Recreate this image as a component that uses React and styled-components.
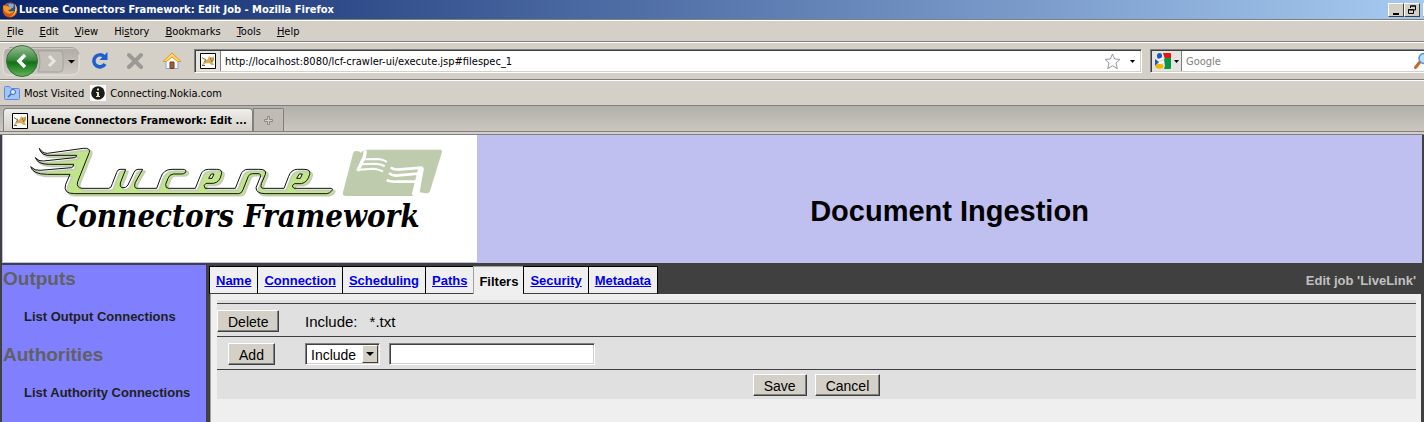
import React from "react";
import styled, { createGlobalStyle, css } from "styled-components";

const chrome = "#d4d0c8";
const dark = "#404040";

const GlobalStyle = createGlobalStyle`
  *, *::before, *::after { box-sizing: border-box; }
  body { margin: 0; background: ${dark}; font-family: "Liberation Sans", Arial, sans-serif; color: #000; }
  button, input, select { font-family: inherit; color: inherit; border-radius: 0; }
  svg { display: block; flex: none; }
`;

const Window = styled.div`
  display: flex;
  flex-direction: column;
  min-height: 100vh;
  overflow: hidden;
`;

const Chrome = styled.header`
  font-family: "DejaVu Sans Condensed", "DejaVu Sans", Tahoma, sans-serif;
  font-size: 11px;
  background: ${chrome};
`;

const TitleBar = styled.div`
  display: flex;
  align-items: center;
  height: 19px;
  padding-left: 2px;
  overflow: hidden;
  background: linear-gradient(90deg, #0a246a, #a6caf0);
  color: #fff;
  font-weight: bold;
`;

const WindowTitle = styled.span`
  flex: 1;
  white-space: nowrap;
  padding-left: 1px;
`;

const WindowButtons = styled.div`
  display: flex;
  margin-right: -15px;
`;

const WindowButton = styled.button`
  width: 16px;
  height: 14px;
  padding: 1px 2px;
  margin-left: ${(p) => (p.$apart ? "3px" : "0")};
  background: ${chrome};
  border: 1px solid;
  border-color: #fff #404040 #404040 #fff;
`;

const Bar = styled.div`
  display: flex;
  align-items: center;
  height: ${(p) => p.$height};
  border-top: 1px solid #fff;
  border-bottom: 1px solid #808080;
`;

const MenuBar = styled(Bar)`
  border-top: 1px solid #808080;
  box-shadow: inset 0 1px #fff;
  padding: 2px 0 0 7px;
  gap: 16px;
`;

const PlainButton = styled.button`
  display: flex;
  align-items: center;
  gap: 4px;
  padding: 0;
  border: 0;
  background: none;
  font-size: 11px;
  white-space: nowrap;
`;

const MenuItem = styled(PlainButton)`
  display: block;
`;

const NavBar = styled(Bar)`
  padding-left: 2px;
`;

const NavIcons = styled.div`
  display: flex;
  align-items: center;
  gap: 18px;
  padding: 0 12px 0 11px;
`;

const Field = styled.div`
  display: flex;
  align-items: center;
  height: 24px;
  background: #fff;
  border: 1px solid;
  border-color: #808080 #fff #fff #808080;
  box-shadow: inset 1px 1px ${dark}, inset -1px -1px ${chrome};
`;

const AddressField = styled(Field)`
  flex: 1;
  padding-right: 6px;
`;

const FieldTools = styled.div`
  display: flex;
  align-items: center;
  gap: 9px;
`;

const SearchField = styled(Field)`
  flex: 0 0 274px;
  margin-left: 8px;
  border-right: 0;
  box-shadow: inset 1px 1px ${dark}, inset 0 -1px ${chrome};
`;

const FieldBadge = styled.div`
  display: flex;
  align-items: center;
  justify-content: center;
  gap: 3px;
  width: ${(p) => p.$width};
  height: 20px;
  margin-left: 1px;
  background: #e6e4df;
  border-right: 1px solid #808080;
`;

const FieldInput = styled.input`
  flex: 1;
  min-width: 0;
  height: 18px;
  padding: 0 0 0 4px;
  border: 0;
  outline: 0;
  background: none;
  font-size: 11px;
  &::placeholder { color: #808080; opacity: 1; }
`;

const BookmarkBar = styled(Bar)`
  padding-left: 4px;
  gap: 6px;
`;

const TabStrip = styled.div`
  display: flex;
  align-items: flex-end;
  height: 26px;
  padding-left: 3px;
  background: linear-gradient(#b3b0a9, #cbc7c0);
  border-bottom: 1px solid #808080;
`;

const BrowserTab = styled.button`
  display: flex;
  align-items: center;
  justify-content: ${(p) => (p.$active ? "flex-start" : "center")};
  gap: 3px;
  width: ${(p) => p.$width};
  height: 23px;
  padding: 1px 0 0 ${(p) => (p.$active ? "8px" : "0")};
  border: 1px solid #808080;
  border-bottom: 0;
  background: ${(p) => (p.$active ? "linear-gradient(#efeeeb, #d4d0c8)" : "#c0bcb5")};
  border-radius: ${(p) => (p.$active ? "4px 4px 0 0" : "0 2px 0 0")};
  font-size: 11px;
  font-weight: bold;
  white-space: nowrap;
`;

const StripEnd = styled.div`
  height: 3px;
  background: ${chrome};
  border-bottom: 1px solid #808080;
`;

const Page = styled.div`
  flex: 1;
  display: flex;
  flex-direction: column;
  padding: 0 2px;
  gap: 2px;
  background: ${dark};
`;

const Banner = styled.div`
  display: flex;
  height: 128px;
  background: #bfbff0;
  padding-left: 1px;
`;

const Logo = styled.div`
  width: 474px;
  flex: none;
  height: 127px;
  padding: 10px 0 0 25px;
  background: #fff;
`;

const LogoName = styled.div`
  padding-left: 28px;
  font: italic bold 31px/34px "DejaVu Serif Condensed", "DejaVu Serif", serif;
  white-space: nowrap;
`;

const BannerTitle = styled.h1`
  flex: 1;
  margin: 0;
  padding-top: 60px;
  text-align: center;
  font-size: 29px;
  line-height: 32px;
`;

const Body = styled.div`
  flex: 1;
  display: flex;
  gap: 3px;
`;

const Sidebar = styled.nav`
  width: 204px;
  flex: none;
  padding: 1px 0 0 1px;
  background: #8080ff;
`;

const SideHeading = styled.h2`
  margin: 0;
  font-size: 19px;
  line-height: 26px;
  color: #606060;
`;

const SideLink = styled.a`
  display: block;
  padding: 16px 0 16px 21px;
  font-size: 13px;
  font-weight: bold;
  line-height: 18px;
  color: #202020;
  text-decoration: none;
  white-space: nowrap;
`;

const Main = styled.main`
  flex: 1;
  min-width: 0;
  display: flex;
  flex-direction: column;
`;

const TabRow = styled.div`
  display: flex;
  align-items: flex-start;
  padding-top: 1px;
  font-size: 13px;
  font-weight: bold;
  line-height: 16px;
`;

const PageTabs = styled.nav`
  display: flex;
  height: 29px;
  border-right: 1px solid #000;
`;

const PageTab = styled.a`
  height: 28px;
  padding: 6px 6px 0;
  border: solid #000;
  border-width: 1px 0 0 1px;
  border-bottom: 1px solid ${dark};
  background: #efefef;
  color: #0000ee;
  ${(p) =>
    p.$active &&
    css`
      height: 29px;
      padding: 7px 5px 0;
      border: 1px solid #a0a0a0;
      border-right: 0;
      border-bottom: 0;
      color: #000;
      text-decoration: none;
    `}
`;

const JobTitle = styled.span`
  margin-left: auto;
  padding: 7px 6px 0 0;
  color: #c0c0c0;
`;

const Content = styled.div`
  flex: 1;
  margin: -1px 1px 0 1px;
  padding: 6px 5px 24px 6px;
  background: #efefef;
  border-left: 1px solid #a0a0a0;
`;

const FormPanel = styled.form`
  padding-top: 3px;
  background: #e0e0e0;
`;

const FilterTable = styled.table`
  width: 100%;
  border-collapse: collapse;
  font-size: 15px;
`;

const Row = styled.tr`
  height: ${(p) => p.$height};
  border-top: 1px solid ${dark};
`;

const Cell = styled.td`
  padding: 2px 0 0;
`;

const ActionCell = styled(Cell)`
  width: 88px;
  padding-right: 19px;
`;

const Controls = styled.div`
  display: flex;
  align-items: center;
  justify-content: ${(p) => (p.$center ? "center" : "flex-start")};
  gap: ${(p) => p.$gap};
`;

const PushButton = styled.button`
  height: 22px;
  padding: 2px 10px 0;
  background: ${chrome};
  border: 1px solid;
  border-color: #fff ${dark} ${dark} #fff;
  box-shadow: inset -1px -1px #808080;
  font-size: 14px;
  line-height: 18px;
  vertical-align: middle;
`;

const SelectBox = styled.div`
  position: relative;
  width: 75px;
  height: 22px;
`;

const Select = styled.select`
  appearance: none;
  width: 100%;
  height: 100%;
  padding: 1px 0 0 5px;
  background: #fff;
  border: 1px solid;
  border-color: #808080 #fff #fff #808080;
  box-shadow: inset 1px 1px ${dark}, inset -1px -1px ${chrome};
  font-size: 14px;
`;

const SelectArrow = styled.span`
  position: absolute;
  top: 2px;
  right: 2px;
  width: 16px;
  height: 18px;
  padding: 6px 3px;
  pointer-events: none;
  background: ${chrome};
  border: 1px solid;
  border-color: #fff ${dark} ${dark} #fff;
`;

const TextBox = styled.input`
  width: 206px;
  height: 22px;
  padding: 0 4px;
  background: #fff;
  border: 1px solid;
  border-color: #808080 #fff #fff #808080;
  box-shadow: inset 1px 1px ${dark}, inset -1px -1px ${chrome};
  font-size: 14px;
`;

const FirefoxIcon = () => (
  <svg width="16" height="16" viewBox="0 0 16 16">
    <circle cx="8" cy="8" r="7.4" fill="#d9570d" />
    <circle cx="8.8" cy="6.3" r="5" fill="#254f9e" />
    <path d="M6 2.5q3-2 6 .5l-1 3-3 .5z" fill="#78aee6" />
    <path d="M1 3l2 1q3-.6 4 1l3 .7-2 2-2 .3q1 2 4 1.3l2-.6q-1 3-5 3-4-1-5-4-1-2-1-4.700z" fill="#f59a23" />
    <path d="M13 2q3 4 1 8-2 4-6 5 7-4 5-13z" fill="#ffd34f" />
  </svg>
);

const Tomcat = () => (
  <svg width="16" height="16" viewBox="0 0 16 16">
    <path d="M.5.5h15v15H.5z" fill="#fff" stroke="#000" />
    <path d="M8 6l1-3 1.500 1.200h2L14 3v4.500L12.500 9l1.500 3h-2.500L9 10l-4 .5L3 12.500l-1-.5 2-3.500z" fill="#d9ab55" />
    <path d="M2 4.500l2 1.500 2 .5M2 12.500h3M4 8.500l2-1" stroke="#6b6357" fill="none" />
    <path d="M10 6h1M12.500 6h.8M11 8h1.500" stroke="#5d482a" fill="none" />
  </svg>
);

const BackForward = () => (
  <svg width="78" height="34" viewBox="0 0 78 34">
    <defs>
      <linearGradient id="back" x2="0" y2="1">
        <stop offset="0" stopColor="#9bbf97" />
        <stop offset=".45" stopColor="#3c8a3e" />
        <stop offset=".55" stopColor="#147018" />
        <stop offset="1" stopColor="#61b65b" />
      </linearGradient>
      <linearGradient id="well" x2="0" y2="1">
        <stop offset="0" stopColor="#b1ada6" />
        <stop offset="1" stopColor="#cfcbc4" />
      </linearGradient>
    </defs>
    <path d="M6 4h64q7 0 7 8v11q0 8-7 8H6q-5 0-5-8V12q0-8 5-8z" fill="url(#well)" stroke="#e7e4df" />
    <path d="M7 3.500h63q6 1 7 7" fill="none" stroke="#a5a29b" />
    <path d="M36 7h22q3 0 3 4v13q0 4-3 4H36q4-10 0-21z" fill="#c3bfb8" stroke="#a4a09a" />
    <circle cx="20" cy="17" r="15.500" fill="url(#back)" stroke="#3a6e3c" />
    <path d="M23 11l-6 6 6 6" fill="none" stroke="#fff" strokeWidth="3.500" />
    <path d="M47 12l5 5-5 5" fill="none" stroke="#e8e6e2" strokeWidth="3" />
    <path d="M66 16h7l-3.500 3.500z" fill="#000" />
  </svg>
);

const ReloadIcon = () => (
  <svg width="17" height="18" viewBox="0 0 17 18">
    <path d="M13 4.500A6 6 0 1 0 14 12" fill="none" stroke="#1d5fd0" strokeWidth="3.500" />
    <path d="M16.500 0v8H8.500z" fill="#1d5fd0" />
  </svg>
);

const StopIcon = () => (
  <svg width="18" height="18" viewBox="0 0 18 18">
    <path d="M3 3l12 12M15 3L3 15" stroke="#9c9994" strokeWidth="4" strokeLinecap="round" />
  </svg>
);

const HomeIcon = () => (
  <svg width="20" height="18" viewBox="0 0 20 18">
    <path d="M4 9v7.500h12V9l-6-5z" fill="#f5f8ff" stroke="#8aa5d6" />
    <path d="M10 1L1 9.500h3.500L10 5l5.500 4.500H19z" fill="#ffd766" stroke="#e29a1c" />
    <path d="M8 10h4v6.500H8z" fill="#9c6032" stroke="#6c4321" />
  </svg>
);

const StarIcon = () => (
  <svg width="17" height="17" viewBox="0 0 17 17">
    <path d="M8.500 1l2.200 5 5.300.4-4 3.600 1.300 5.600-4.800-2.800-4.800 2.800L5 10 1 6.400 6.300 6z" fill="#fafafa" stroke="#999" />
  </svg>
);

const Caret = () => (
  <svg width="5" height="3" viewBox="0 0 5 3">
    <path d="M0 0h5L2.500 3z" fill="#000" />
  </svg>
);

const GoogleIcon = () => (
  <svg width="16" height="16" viewBox="0 0 16 16">
    <path d="M8 0h7q1 0 1 1v5H10z" fill="#e8150e" />
    <path d="M9 6q2-2 7-1v10q0 1-1 1H9l1-3z" fill="#0b9444" />
    <path d="M0 6l4 3-4 4z" fill="#1a57c4" />
    <ellipse cx="4.500" cy="3" rx="2.500" ry="3" fill="#1a57c4" />
    <ellipse cx="4.500" cy="13.200" rx="4" ry="2.500" fill="#f5b400" />
    <path d="M3 7l5-2M4 10l5-1" stroke="#fff" strokeWidth="1.500" />
  </svg>
);

const SearchIcon = () => (
  <svg width="10" height="16" viewBox="0 0 10 16">
    <path d="M1.500 14.500L5.500 9.500" stroke="#c9682b" strokeWidth="3" strokeLinecap="round" />
    <circle cx="10" cy="5.500" r="5" fill="#b9defa" stroke="#5a90d0" strokeWidth="1.500" />
  </svg>
);

const FolderIcon = () => (
  <svg width="16" height="14" viewBox="0 0 16 14">
    <path d="M.5 1.500q0-1 1-1h4l1.500 2h7.500q1 0 1 1v9q0 1-1 1h-13q-1 0-1-1z" fill="#a3c5f5" stroke="#5c8cd6" />
    <circle cx="9" cy="6" r="2.500" fill="#dbeafc" stroke="#3668bd" />
    <path d="M7 8l-3 3" stroke="#3668bd" strokeWidth="1.500" />
  </svg>
);

const InfoIcon = () => (
  <svg width="16" height="16" viewBox="0 0 16 16">
    <path d="M0 0h16v16H0z" fill="#fff" />
    <circle cx="8" cy="8" r="6.800" fill="#1b1b1b" />
    <path d="M7 3.500h2v2H7zM6 7h3v4h1v1H6v-1h1V8H6z" fill="#e9e5b8" />
  </svg>
);

const PlusIcon = () => (
  <svg width="9" height="9" viewBox="0 0 9 9">
    <path d="M3.500.5h2v3h3v2h-3v3h-2v-3h-3v-2h3z" fill="#d4d0c8" stroke="#8b8883" />
  </svg>
);

const script =
  "M118 52Q124 66 142 67L250 52Q272 50 268 64L233 152Q228 170 246 172H326Q334 172 337 158L350 124Q353 115 360 115H377L361 156Q358 168 366 170Q378 172 384 162L402 124Q406 115 414 115H428L406 154Q400 172 412 172H470L482 140Q490 115 516 115H548Q562 115 556 125Q552 129 544 129H520Q508 130 504 142L497 160Q496 172 506 172H586L602 132Q608 115 626 115H650Q669 115 664 130Q660 154 640 157H618Q608 162 615 172H706L722 132Q728 115 744 115H776Q801 114 796 130L784 158Q780 172 790 172H852L866 136Q874 115 892 115H912Q933 115 929 130Q923 154 904 158H884Q872 164 882 172H990Q1000 171 996 178Q990 188 980 188H796Q768 188 768 170L781 138Q784 128 774 128H758Q748 128 745 136L729 176Q725 188 716 188H224Q188 188 197 160L210 130H142Q98 130 92 107Q104 120 120 118L215 110Q221 107 221 100H148Q112 100 106 80Q116 92 130 90L224 80Q232 76 230 73H156Q122 76 118 52Z";

const LuceneLogo = () => (
  <svg width="416" height="54" viewBox="84 42 1248 162" role="img" aria-label="Lucene">
    <path d={script} transform="translate(7 6)" fill="#c0e688" stroke="#c6c9c1" strokeWidth="5" strokeLinejoin="round" />
    <path d={script} transform="translate(5 4)" fill="none" stroke="#c0e688" strokeWidth="1" />
    <path d={script} fill="none" stroke="#111" strokeWidth="3" strokeLinejoin="round" />
    <path d="M626 142L634 129H642L636 142ZM890 142L898 129H907L901 142Z" fill="#eef3e4" stroke="#111" strokeWidth="3" />
    <path d="M1068 60Q1080 60 1083 66L1084 62L1100 56H1320Q1328 56 1325 66L1290 180Q1288 187 1278 187L1259 184L1272 110L1240 188Q1234 192 1240 195H1036Q1026 194 1029 184L1058 72Q1060 60 1068 60Z" fill="#bfcbad" />
    <g fill="none" stroke="#fff">
      <path d="M1096 58Q1094 80 1088 88L1073 120" strokeWidth="10" />
      <path d="M1088 85L1134 84Q1154 86 1160 93M1082 100L1128 98Q1146 100 1154 106M1074 116L1120 113Q1140 115 1149 122" strokeWidth="6" />
      <path d="M1172 109Q1180 117 1200 115L1268 110M1168 126Q1176 136 1194 133L1256 128M1160 148Q1172 153 1190 152H1250" strokeWidth="8" />
      <path d="M1264 108L1243 192" strokeWidth="16" />
    </g>
  </svg>
);

const menus = ["File", "Edit", "View", "Hi|story", "Bookmarks", "Tools", "Help"];
const tabs = ["Name", "Connection", "Scheduling", "Paths", "Filters", "Security", "Metadata"];

const Menu = ({ label }) => {
  const [before, rest] = label.includes("|") ? label.split("|") : ["", label];
  return (
    <MenuItem type="button">
      {before}
      <u>{rest[0]}</u>
      {rest.slice(1)}
    </MenuItem>
  );
};

export default function App() {
  return (
    <Window>
      <GlobalStyle />
      <Chrome>
        <TitleBar>
          <FirefoxIcon />
          <WindowTitle>Lucene Connectors Framework: Edit Job - Mozilla Firefox</WindowTitle>
          <WindowButtons>
            <WindowButton aria-label="Minimize">
              <svg width="10" height="10"><path d="M2 8h6v2H2z" /></svg>
            </WindowButton>
            <WindowButton aria-label="Restore">
              <svg width="10" height="10">
                <path d="M3.500 3V1h5v4H7M3 1h6M1.500 4.500h5v4h-5zM1 5h6" fill="none" stroke="#000" />
              </svg>
            </WindowButton>
            <WindowButton $apart aria-label="Close" />
          </WindowButtons>
        </TitleBar>
        <MenuBar $height="23px">
          {menus.map((m) => <Menu key={m} label={m} />)}
        </MenuBar>
        <NavBar $height="38px">
          <BackForward />
          <NavIcons>
            <ReloadIcon />
            <StopIcon />
            <HomeIcon />
          </NavIcons>
          <AddressField>
            <FieldBadge $width="25px"><Tomcat /></FieldBadge>
            <FieldInput aria-label="Address" defaultValue="http://localhost:8080/lcf-crawler-ui/execute.jsp#filespec_1" />
            <FieldTools>
              <StarIcon />
              <Caret />
            </FieldTools>
          </AddressField>
          <SearchField>
            <FieldBadge $width="30px"><GoogleIcon /><Caret /></FieldBadge>
            <FieldInput aria-label="Search" placeholder="Google" />
            <SearchIcon />
          </SearchField>
        </NavBar>
        <BookmarkBar $height="26px">
          <PlainButton type="button"><FolderIcon />Most Visited</PlainButton>
          <PlainButton type="button"><InfoIcon />Connecting.Nokia.com</PlainButton>
        </BookmarkBar>
        <TabStrip>
          <BrowserTab $active $width="250px"><Tomcat />Lucene Connectors Framework: Edit ...</BrowserTab>
          <BrowserTab $width="31px" aria-label="New tab"><PlusIcon /></BrowserTab>
        </TabStrip>
        <StripEnd />
      </Chrome>
      <Page>
        <Banner>
          <Logo>
            <LuceneLogo />
            <LogoName>Connectors Framework</LogoName>
          </Logo>
          <BannerTitle>Document Ingestion</BannerTitle>
        </Banner>
        <Body>
          <Sidebar>
            <SideHeading>Outputs</SideHeading>
            <SideLink href="#outputs">List Output Connections</SideLink>
            <SideHeading>Authorities</SideHeading>
            <SideLink href="#authorities">List Authority Connections</SideLink>
          </Sidebar>
          <Main>
            <TabRow>
              <PageTabs>
                {tabs.map((t) => (
                  <PageTab key={t} href={"#" + t.toLowerCase()} $active={t === "Filters"}>{t}</PageTab>
                ))}
              </PageTabs>
              <JobTitle>Edit job 'LiveLink'</JobTitle>
            </TabRow>
            <Content>
              <FormPanel onSubmit={(e) => e.preventDefault()}>
                <FilterTable>
                  <tbody>
                    <Row $height="33px">
                      <ActionCell><PushButton type="button">Delete</PushButton></ActionCell>
                      <Cell><Controls $gap="12px"><span>Include:</span><span>*.txt</span></Controls></Cell>
                    </Row>
                    <Row $height="33px">
                      <ActionCell><Controls $center $gap="0"><PushButton type="button">Add</PushButton></Controls></ActionCell>
                      <Cell>
                        <Controls $gap="9px">
                          <SelectBox>
                            <Select aria-label="Filter type" defaultValue="Include">
                              <option>Include</option>
                              <option>Exclude</option>
                            </Select>
                            <SelectArrow><svg width="8" height="4"><path d="M0 0h8L4 4z" /></svg></SelectArrow>
                          </SelectBox>
                          <TextBox aria-label="File specification" />
                        </Controls>
                      </Cell>
                    </Row>
                    <Row $height="29px">
                      <Cell colSpan={2}>
                        <Controls $center $gap="8px">
                          <PushButton type="submit">Save</PushButton>
                          <PushButton type="button">Cancel</PushButton>
                        </Controls>
                      </Cell>
                    </Row>
                  </tbody>
                </FilterTable>
              </FormPanel>
            </Content>
          </Main>
        </Body>
      </Page>
    </Window>
  );
}
